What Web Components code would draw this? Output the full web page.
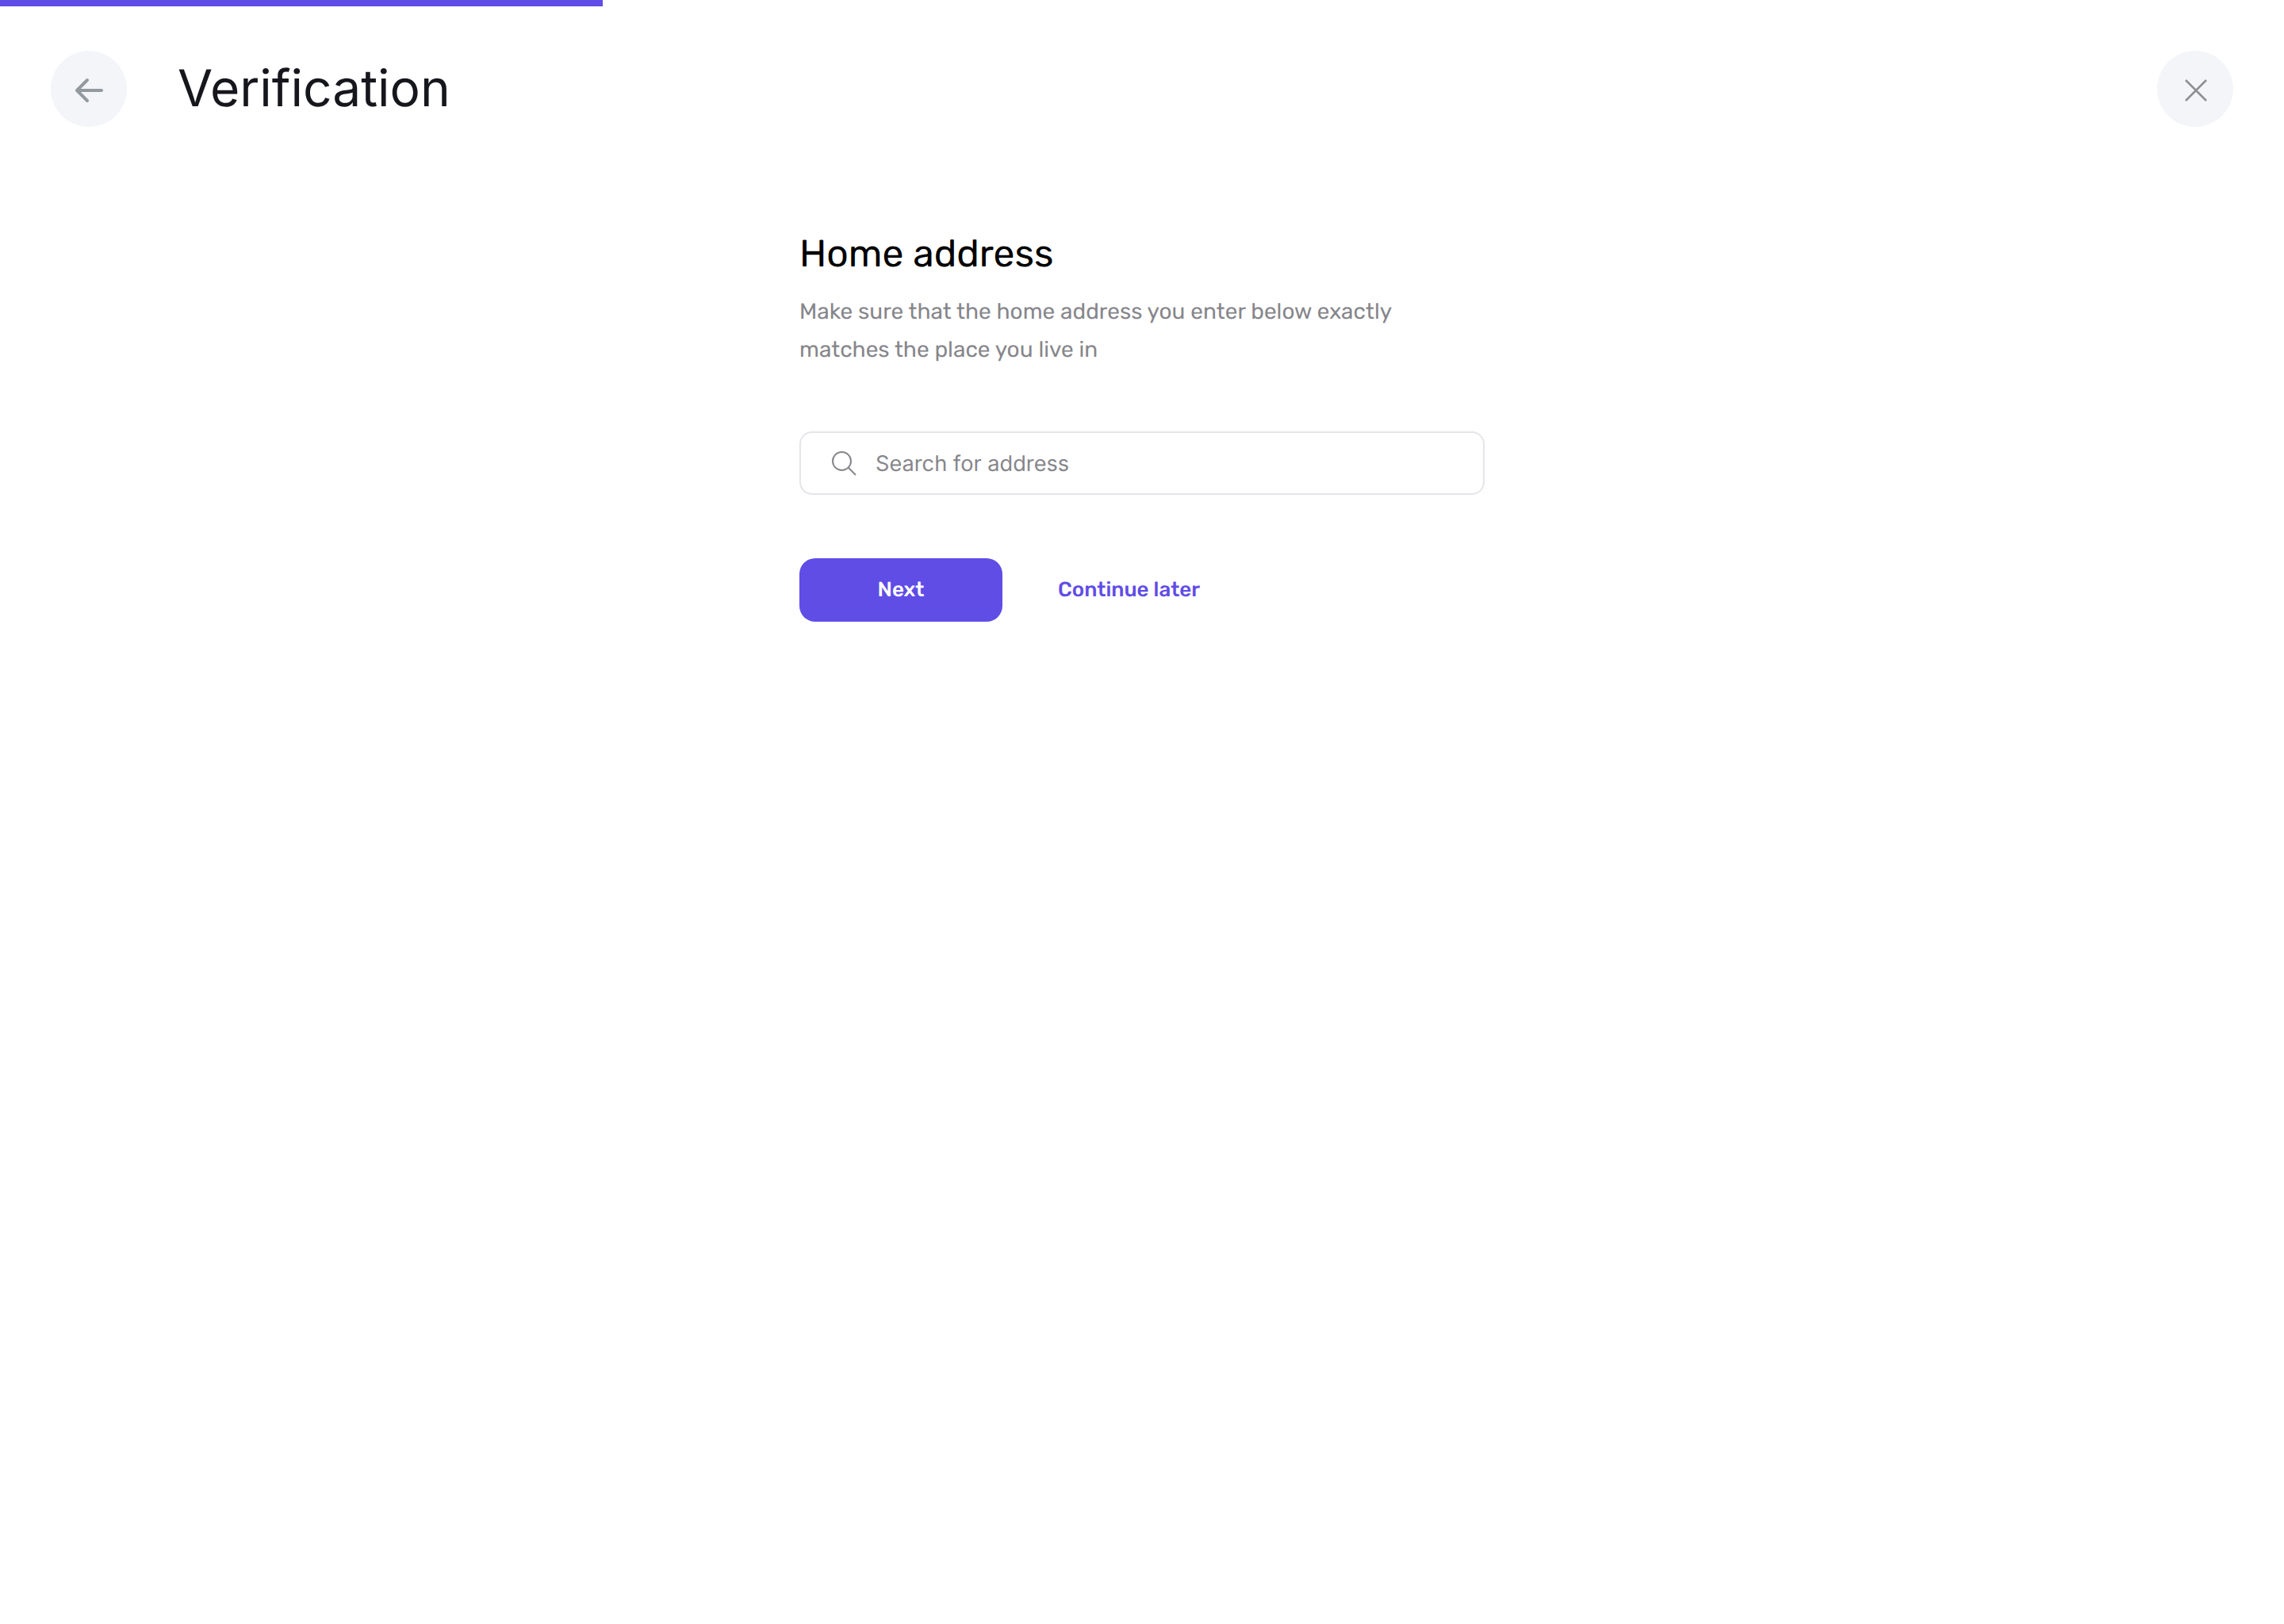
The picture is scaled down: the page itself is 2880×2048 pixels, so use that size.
<!DOCTYPE html>
<html lang="en">
<head>
<meta charset="utf-8">
<title>Verification</title>
<style>
html, body { margin: 0; padding: 0; background: #fff; }
body { font-family: Inter, "Liberation Sans", sans-serif; text-rendering: geometricPrecision; }
</style>
</head>
<body>
<verify-page>
  <span slot="title">Verification</span>
  <address-form>
    <span slot="heading">Home address</span>
    <span slot="desc">Make sure that the home address you enter below exactly<br>matches the place you live in</span>
  </address-form>
</verify-page>

<script>
const roundButtonTemplate = document.createElement("template");
roundButtonTemplate.innerHTML = `
<style>
:host { display: block; width: 96px; height: 96px; flex: none; }
button {
  width: 96px; height: 96px; padding: 4px 0 0 2px; border: 0; border-radius: 50%;
  background: #f4f5f9; display: flex; align-items: center; justify-content: center;
  box-sizing: border-box;
}
svg { display: block; }
</style>
<button></button>`;

const ICONS = {
  back: `<svg width="40" height="34" viewBox="0 0 40 34" fill="none" stroke="#939a9f" stroke-width="4" stroke-linecap="round" stroke-linejoin="round"><path d="M4 17h31M17 4 4 17l13 13"/></svg>`,
  close: `<svg width="28" height="28" viewBox="0 0 28 28" fill="none" stroke="#8e8e93" stroke-width="2.500"><path d="M1 1l26 26M27 1L1 27"/></svg>`,
};

class RoundButton extends HTMLElement {
  constructor() {
    super();
    this.attachShadow({ mode: "open" });
    this.shadowRoot.appendChild(roundButtonTemplate.content.cloneNode(true));
    this.shadowRoot.querySelector("button").innerHTML = ICONS[this.getAttribute("icon")];
  }
}
customElements.define("round-button", RoundButton);

const searchTemplate = document.createElement("template");
searchTemplate.innerHTML = `
<style>
:host { display: block; }
.box {
  box-sizing: border-box; height: 80px; border: 2px solid #e5e5ea; border-radius: 16px;
  display: flex; align-items: center; gap: 24px; padding-left: 38px;
}
svg { flex: none; }
span { font: 400 27.200px Inter, sans-serif; color: #86868b; }
</style>
<div class="box">
  <svg width="32" height="32" viewBox="0 0 32 32" fill="none" stroke="#86868b" stroke-width="2"><circle cx="13.500" cy="13.500" r="11.500"/><path d="M21.500 21.500 31 31"/></svg>
  <span>Search for address</span>
</div>`;

class SearchBox extends HTMLElement {
  constructor() {
    super();
    this.attachShadow({ mode: "open" });
    this.shadowRoot.appendChild(searchTemplate.content.cloneNode(true));
  }
}
customElements.define("search-box", SearchBox);

const formTemplate = document.createElement("template");
formTemplate.innerHTML = `
<style>
:host { display: block; width: 864px; margin-left: 1008px; padding-top: 128px; }
.heading { font: 400 48px/64px Rubik, Inter, sans-serif; color: #000; }
.desc { margin-top: 17px; font: 400 28px/48px Rubik, Inter, sans-serif; color: #86868b; }
search-box { margin-top: 79px; }
.actions { margin-top: 80px; display: flex; align-items: center; gap: 70px; }
.next {
  box-sizing: border-box; width: 256px; height: 80px; padding-bottom: 2px;
  background: #5f4de6; color: #fff; border-radius: 20px;
  display: flex; align-items: center; justify-content: center;
  font: 500 26px Rubik, Inter, sans-serif;
}
.later { padding-bottom: 2px; font: 500 26px Rubik, Inter, sans-serif; color: #5f4de6; }
</style>
<div class="heading"><slot name="heading"></slot></div>
<div class="desc"><slot name="desc"></slot></div>
<search-box></search-box>
<div class="actions">
  <div class="next">Next</div>
  <div class="later">Continue later</div>
</div>`;

class AddressForm extends HTMLElement {
  constructor() {
    super();
    this.attachShadow({ mode: "open" });
    this.shadowRoot.appendChild(formTemplate.content.cloneNode(true));
  }
}
customElements.define("address-form", AddressForm);

const pageTemplate = document.createElement("template");
pageTemplate.innerHTML = `
<style>
:host { display: block; min-height: 2048px; }
.progress { width: 760px; height: 8px; background: #5f4de6; }
header { display: flex; align-items: center; padding: 56px 64px 0; gap: 64px; }
h1 { margin: 0; flex: 1; font: 400 64px/96px Inter, sans-serif; color: #16161d; }
</style>
<div class="progress"></div>
<header>
  <round-button icon="back"></round-button>
  <h1><slot name="title"></slot></h1>
  <round-button icon="close"></round-button>
</header>
<slot></slot>`;

class VerifyPage extends HTMLElement {
  constructor() {
    super();
    this.attachShadow({ mode: "open" });
    this.shadowRoot.appendChild(pageTemplate.content.cloneNode(true));
  }
}
customElements.define("verify-page", VerifyPage);
</script>
</body>
</html>
